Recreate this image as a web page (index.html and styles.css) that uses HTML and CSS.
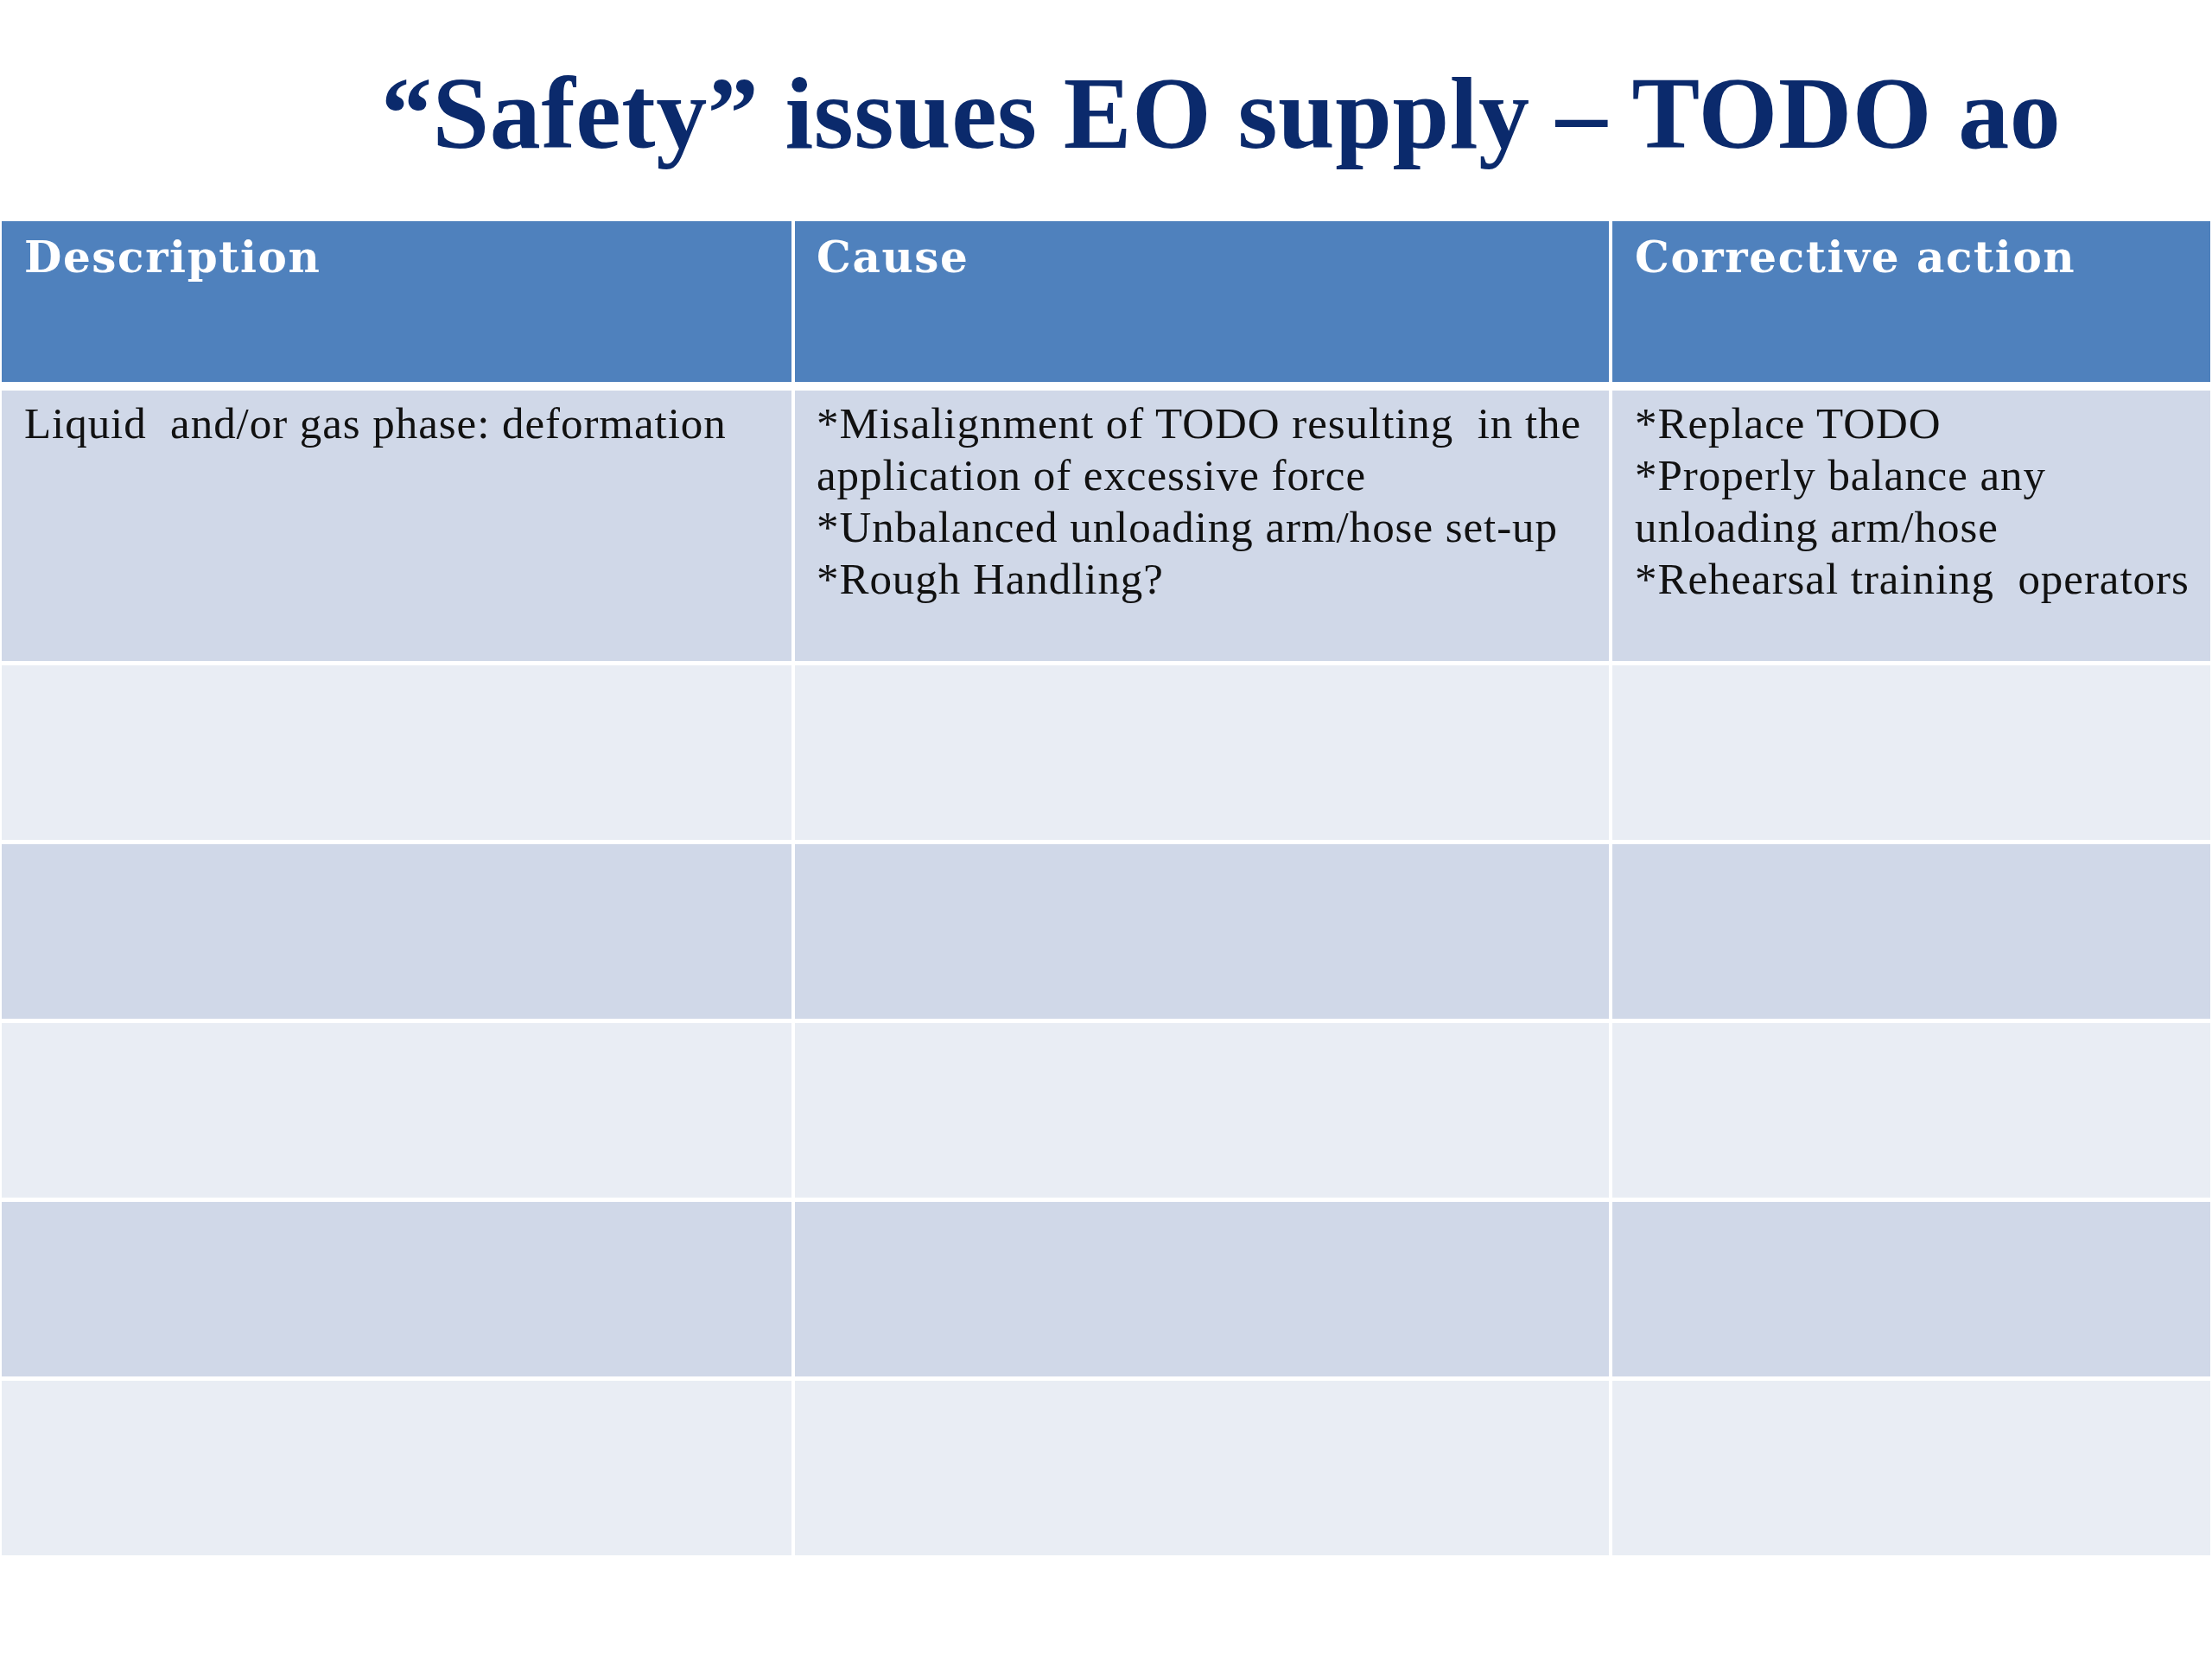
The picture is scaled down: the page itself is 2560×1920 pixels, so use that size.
FILE: index.html
```html
<!DOCTYPE html>
<html lang="en">
<head>
<meta charset="utf-8">
<title>Safety issues EO supply</title>
<link rel="stylesheet" href="styles.css">
</head>
<body>
<div class="slide">
  <header class="title-area">
    <h1 class="title">“Safety” issues EO supply – TODO ao</h1>
  </header>
  <div class="table">
    <div class="cell head">Description</div>
    <div class="cell head">Cause</div>
    <div class="cell head">Corrective action</div>

    <div class="cell odd first"><span class="txt">Liquid  and/or gas phase: deformation</span></div>
    <div class="cell odd first"><span class="txt">*Misalignment of TODO resulting  in the<br>application of excessive force<br>*Unbalanced unloading arm/hose set-up<br>*Rough Handling?</span></div>
    <div class="cell odd first"><span class="txt">*Replace TODO<br>*Properly balance any<br>unloading arm/hose<br>*Rehearsal training  operators</span></div>

    <div class="cell even"></div><div class="cell even"></div><div class="cell even"></div>
    <div class="cell odd"></div><div class="cell odd"></div><div class="cell odd"></div>
    <div class="cell even"></div><div class="cell even"></div><div class="cell even"></div>
    <div class="cell odd"></div><div class="cell odd"></div><div class="cell odd"></div>
    <div class="cell even"></div><div class="cell even"></div><div class="cell even"></div>
  </div>
</div>
</body>
</html>
```

FILE: styles.css
```css
html, body {
  margin: 0;
  padding: 0;
  background: #ffffff;
}

.slide {
  width: 2560px;
  height: 1920px;
  background: #ffffff;
  font-family: "Liberation Serif", "Times New Roman", serif;
}

.title-area {
  height: 256px;
  padding-left: 441px;
  box-sizing: border-box;
}

.title {
  margin: 0;
  padding-top: 62px;
  font-size: 118px;
  line-height: 140px;
  font-weight: bold;
  color: #0b2a6c;
  white-space: nowrap;
  letter-spacing: 0.6px;
}

.table {
  display: grid;
  grid-template-columns: 914px 942px 692px;
  grid-template-rows: 186px 318px repeat(5, 202px);
  column-gap: 4px;
  row-gap: 5px;
  margin-left: 2px;
  width: 2556px;
}

.cell {
  box-sizing: border-box;
  font-size: 51px;
  line-height: 60px;
  letter-spacing: 0.95px;
  color: #111111;
  white-space: pre-wrap;
}

.cell:nth-child(3n+1) { padding-left: 26px; }
.cell:nth-child(3n+2) { padding-left: 25px; }
.cell:nth-child(3n) { padding-left: 26px; }

.head {
  background: #4f81bd;
  color: #ffffff;
  font-family: "DejaVu Serif", "Liberation Serif", serif;
  font-weight: bold;
  font-size: 50px;
  letter-spacing: 1.6px;
  padding-top: 12px;
}

.first {
  margin-top: 5px;
  padding-top: 8px;
}

.odd { background: #d0d8e8; }
.even { background: #e9edf4; }
```
